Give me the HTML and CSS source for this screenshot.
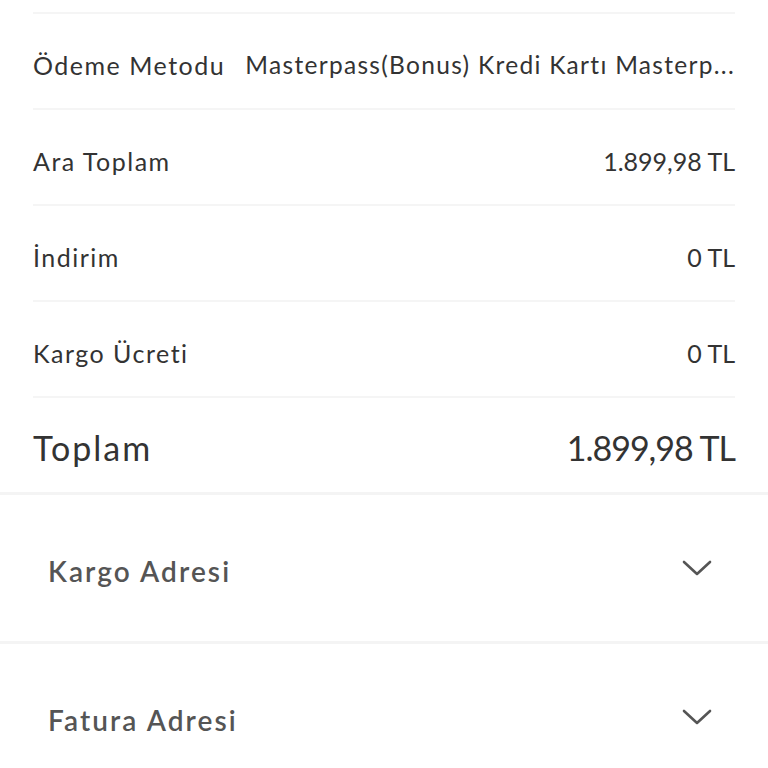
FILE: index.html
```html
<!DOCTYPE html>
<html lang="tr">
<head>
<meta charset="utf-8">
<link rel="stylesheet" href="styles.css">
</head>
<body>
<div class="summary">
  <div class="top-edge"></div>
  <div class="row">
    <span class="label">Ödeme Metodu</span>
    <span class="value method">Masterpass(Bonus) Kredi Kartı Masterp...</span>
  </div>
  <div class="row">
    <span class="label">Ara Toplam</span>
    <span class="value">1.899,98 TL</span>
  </div>
  <div class="row">
    <span class="label">İndirim</span>
    <span class="value">0 TL</span>
  </div>
  <div class="row">
    <span class="label">Kargo Ücreti</span>
    <span class="value">0 TL</span>
  </div>
  <div class="row total">
    <span class="label">Toplam</span>
    <span class="value">1.899,98 TL</span>
  </div>
</div>
<div class="section">
  <span class="section-title">Kargo Adresi</span>
  <svg class="chev" width="30" height="16" viewBox="0 0 30 16"><path d="M2 2 L15 14 L28 2" fill="none" stroke="#555" stroke-width="2.6" stroke-linecap="round" stroke-linejoin="round"/></svg>
</div>
<div class="section">
  <span class="section-title">Fatura Adresi</span>
  <svg class="chev" width="30" height="16" viewBox="0 0 30 16"><path d="M2 2 L15 14 L28 2" fill="none" stroke="#555" stroke-width="2.6" stroke-linecap="round" stroke-linejoin="round"/></svg>
</div>
</body>
</html>
```
FILE: styles.css
```css
html, body {
  margin: 0;
  padding: 0;
  background: #ffffff;
}
body {
  font-family: "Lato", "Noto Sans", sans-serif;
  color: #333333;
  width: 768px;
  overflow: hidden;
}
.summary {
  padding: 0 33px;
  border-bottom: 3px solid #f4f4f4;
}
.top-edge {
  height: 12px;
  border-bottom: 2px solid #f5f5f5;
}
.row {
  height: 96px;
  box-sizing: border-box;
  border-bottom: 2px solid #f5f5f5;
  display: flex;
  align-items: center;
  justify-content: space-between;
  gap: 16px;
  font-size: 25px;
  padding-top: 7px;
}
.row:last-child {
  border-bottom: none;
}
.label {
  white-space: nowrap;
  letter-spacing: 1.5px;
}
.value {
  white-space: nowrap;
  text-align: right;
}
.method {
  letter-spacing: 1.3px;
  font-size: 24.5px;
}
.total {
  font-size: 34px;
  height: 94px;
  padding-top: 4px;
}
.total .label {
  letter-spacing: 2px;
}
.total .value {
  letter-spacing: -1px;
}
.section {
  height: 146px;
  border-bottom: 3px solid #f4f4f4;
  display: flex;
  align-items: center;
  justify-content: space-between;
  padding: 0 56px 0 48px;
}
.section-title {
  font-size: 28px;
  font-weight: 600;
  color: #555555;
  letter-spacing: 2.1px;
  padding-top: 6px;
}
.chev {
  display: block;
}
```
